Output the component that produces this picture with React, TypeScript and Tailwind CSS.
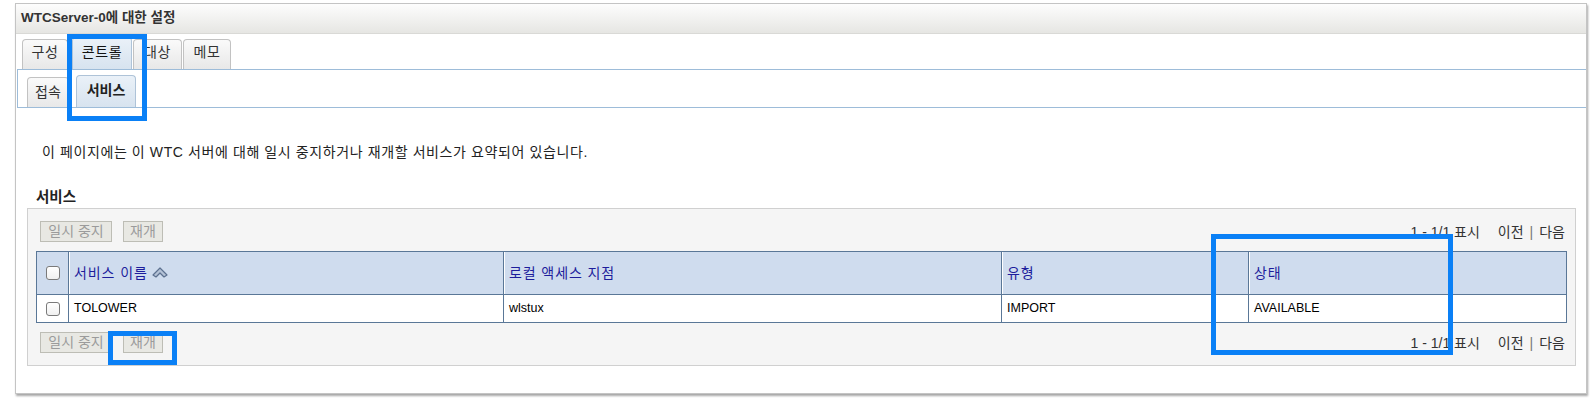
import React from "react";

const tabs = [
  { label: "구성", w: "w-[46px]", ml: "ml-0", active: false },
  { label: "콘트롤", w: "w-[60px]", ml: "ml-[4px]", active: true },
  { label: "대상", w: "w-[49px]", ml: "ml-[1px]", active: false },
  { label: "메모", w: "w-[48px]", ml: "ml-[1px]", active: false },
];

const Checkbox = () => (
  <div className="w-[14px] h-[14px] mx-auto rounded-[3px] border border-[#7a7a7a] bg-gradient-to-b from-white to-[#f0f0f0]" />
);

const SortIcon = () => (
  <svg width="16" height="12" viewBox="0 0 16 12" className="inline-block ml-[4px] -mt-[3px]">
    <path d="M1 9 L8 2 L15 9 L12 11 L8 7 L4 11 Z" fill="#b4c2d6" stroke="#5d7190" strokeWidth="1.2" strokeLinejoin="round" />
  </svg>
);

const ToolButton = ({ label, w }: { label: string; w: string }) => (
  <button
    type="button"
    className={`${w} h-[21px] border border-[#bdbdb5] bg-[#e8e8e3] text-[14px] leading-[19px] text-[#9b9b9b] text-center`}
  >
    {label}
  </button>
);

const Toolbar = () => (
  <div className="flex items-center">
    <div className="flex items-center gap-[11px] pl-[12px]">
      <ToolButton label="일시 중지" w="w-[72px]" />
      <ToolButton label="재개" w="w-[40px]" />
    </div>
    <div className="ml-auto pr-[10px] text-[14px] leading-[18px] text-[#333]">
      <span>1 - 1/1 표시</span>
      <span className="ml-[18px]">이전</span>
      <span className="mx-[6px] text-[#777]">|</span>
      <span>다음</span>
    </div>
  </div>
);

const headCell =
  "h-[43px] border-r border-[#5a7797] text-left font-normal pl-[5px] text-[14px] tracking-[0.9px] text-[#1d1d9c] shadow-[inset_1px_0_0_#ffffff]";
const bodyCell = "h-[28px] border-r border-[#5a7797] pl-[5px] text-[12.5px] text-black";

export default function App() {
  return (
    <div className="relative w-[1590px] h-[410px] bg-white font-['Liberation_Sans','Noto_Sans_CJK_KR',sans-serif]">
      <div className="ml-[15px] mt-[3px] w-[1572px] h-[391px] border border-[#c4c4c4] shadow-[1px_2px_2px_rgba(0,0,0,0.35)]">
        {/* title */}
        <div className="h-[30px] flex items-center pl-[5px] border-b border-[#d9d9d6] bg-gradient-to-b from-[#fdfdfd] to-[#e6e6e3] text-[13.5px] font-bold text-[#333]">
          WTCServer-0에 대한 설정
        </div>

        {/* tabs */}
        <div className="pl-[1px]">
          <div className="flex items-end h-[36px] pl-[5px] border-b border-[#9dbcd9]">
            {tabs.map((t) => (
              <div
                key={t.label}
                className={`${t.w} ${t.ml} ${
                  t.active
                    ? "h-[32px] pt-[5px] bg-gradient-to-b from-[#eaf1f8] to-[#d7e3ef] border-[#aec3d8] text-[#111]"
                    : "h-[30px] pt-[3px] bg-gradient-to-b from-[#fafafa] to-[#e8e8e8] border-[#c2c2c2] text-[#333]"
                } border border-b-0 rounded-t-[4px] text-center text-[14px] tracking-[0.6px] leading-[18px]`}
              >
                {t.label}
              </div>
            ))}
          </div>
          <div className="flex items-end h-[38px] pl-[9px] border-l border-b border-[#9dbcd9]">
            <div className="w-[42px] h-[30px] border border-b-0 border-[#c2c2c2] rounded-t-[4px] bg-gradient-to-b from-[#fafafa] to-[#e8e8e8] text-center text-[14px] leading-[18px] pt-[5px] text-[#333]">
              접속
            </div>
            <div className="ml-[7px] w-[60px] h-[32px] border border-b-0 border-[#aec3d8] rounded-t-[4px] bg-gradient-to-b from-[#eaf1f8] to-[#d7e3ef] text-center text-[14px] leading-[18px] pt-[5px] font-bold text-[#222]">
              서비스
            </div>
          </div>
        </div>

        {/* body */}
        <p className="mt-[35px] pl-[26px] text-[14px] tracking-[0.6px] leading-[18px] text-[#222]">
          이 페이지에는 이 WTC 서버에 대해 일시 중지하거나 재개할 서비스가 요약되어 있습니다.
        </p>
        <h2 className="mt-[27px] pl-[20px] text-[14.5px] leading-[18px] font-bold text-[#222]">서비스</h2>

        <div className="mt-[2px] ml-[11px] w-[1549px] h-[158px] border border-[#d0d0d0] bg-[#f5f5f5] pt-[12px]">
          <Toolbar />
          <table className="mt-[9px] ml-[8px] w-[1531px] border-collapse border border-[#5a7797] table-fixed">
            <colgroup>
              <col className="w-[32px]" />
              <col className="w-[435px]" />
              <col className="w-[498px]" />
              <col className="w-[247px]" />
              <col />
            </colgroup>
            <thead>
              <tr className="bg-[#cfdcee] border-b border-[#5a7797]">
                <th className="h-[43px] border-r border-[#5a7797]">
                  <Checkbox />
                </th>
                <th className={headCell}>
                  서비스 이름
                  <SortIcon />
                </th>
                <th className={headCell}>로컬 액세스 지점</th>
                <th className={headCell}>유형</th>
                <th className={headCell}>상태</th>
              </tr>
            </thead>
            <tbody>
              <tr className="bg-white">
                <td className="h-[28px] border-r border-[#5a7797]">
                  <Checkbox />
                </td>
                <td className={bodyCell}>TOLOWER</td>
                <td className={bodyCell}>wlstux</td>
                <td className={bodyCell}>IMPORT</td>
                <td className={bodyCell}>AVAILABLE</td>
              </tr>
            </tbody>
          </table>
          <div className="mt-[9px]">
            <Toolbar />
          </div>
        </div>
      </div>

      {/* annotation boxes */}
      <div className="absolute left-[67px] top-[31px] w-[80px] h-[87px] border-[5px] border-[#0a80f6]" />
      <div className="absolute left-[108px] top-[328px] w-[69px] h-[34px] border-[5px] border-[#0a80f6]" />
      <div className="absolute left-[1211px] top-[231px] w-[242px] h-[121px] border-[5px] border-[#0a80f6]" />
    </div>
  );
}
